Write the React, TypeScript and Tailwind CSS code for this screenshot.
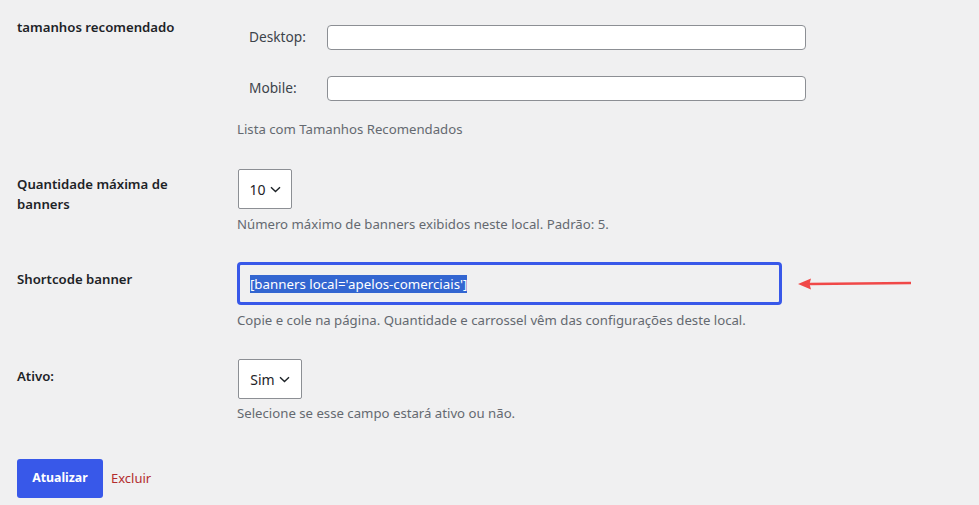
import type { ReactNode } from "react";

const font = { fontFamily: '"Segoe UI", "Noto Sans", "Liberation Sans", sans-serif' };

function Chevron() {
  return (
    <svg width="11" height="7" viewBox="0 0 11 7" className="ml-[4px]">
      <path d="M1 1.2 L5.5 5.6 L10 1.2" fill="none" stroke="#1d2327" strokeWidth="1.4" />
    </svg>
  );
}

function Select({ value, width }: { value: string; width: string }) {
  return (
    <div
      className={`flex h-[40px] ${width} items-center justify-center rounded-[2px] border border-[#8c8f94] bg-white text-[14px] text-[#1d2327]`}
    >
      {value}
      <Chevron />
    </div>
  );
}

function Row({ label, pt, children }: { label: ReactNode; pt: string; children: ReactNode }) {
  return (
    <div className="flex items-start">
      <div className={`w-[220px] shrink-0 ${pt} pr-[20px] text-[13.2px] leading-[20px] font-semibold text-[#1d2327]`}>
        {label}
      </div>
      <div className="flex flex-col">{children}</div>
    </div>
  );
}

function Desc({ children, mt }: { children: ReactNode; mt: string }) {
  return <p className={`${mt} text-[13.2px] leading-[18px] text-[#646970]`}>{children}</p>;
}

export default function App() {
  return (
    <div className="min-h-[505px] bg-[#f0f0f1] pt-[17px] pl-[17px]" style={font}>
      {/* tamanhos */}
      <Row label="tamanhos recomendado" pt="pt-0">
        <div className="mt-[8px] flex items-center">
          <span className="w-[90px] pl-[12px] text-[13.7px] text-[#3c434a]">Desktop:</span>
          <div className="h-[25px] w-[479px] rounded-[4px] border border-[#8c8f94] bg-white" />
        </div>
        <div className="mt-[26px] flex items-center">
          <span className="w-[90px] pl-[12px] text-[13.7px] text-[#3c434a]">Mobile:</span>
          <div className="h-[25px] w-[479px] rounded-[4px] border border-[#8c8f94] bg-white" />
        </div>
        <Desc mt="mt-[19px]">Lista com Tamanhos Recomendados</Desc>
      </Row>

      {/* quantidade */}
      <div className="mt-[31px]">
        <Row label={<>Quantidade máxima de<br />banners</>} pt="pt-[5px]">
          <div className="pl-[1px]">
            <Select value="10" width="w-[54px]" />
          </div>
          <Desc mt="mt-[6px]">Número máximo de banners exibidos neste local. Padrão: 5.</Desc>
        </Row>
      </div>

      {/* shortcode */}
      <div className="mt-[29px]">
        <Row label="Shortcode banner" pt="pt-[7px]">
          <div className="flex items-center">
            <div className="flex h-[43px] w-[545px] items-center rounded-[4px] border-[3px] border-[#3858e9] bg-[#f0f0f1] pl-[10px]">
              <span className="bg-[#3366d1] text-[13.3px] leading-[18px] text-white">
                [banners local='apelos-comerciais']
              </span>
            </div>
            <svg width="116" height="14" viewBox="0 0 116 14" className="ml-[15px]">
              <line x1="12" y1="7" x2="114" y2="6" stroke="#f04848" strokeWidth="2.4" />
              <path d="M1 7 L14 1.5 L12.5 7 L14 12.5 Z" fill="#f04848" />
            </svg>
          </div>
          <Desc mt="mt-[6px]">Copie e cole na página. Quantidade e carrossel vêm das configurações deste local.</Desc>
        </Row>
      </div>

      {/* ativo */}
      <div className="mt-[30px]">
        <Row label="Ativo:" pt="pt-[7px]">
          <div className="pl-[1px]">
            <Select value="Sim" width="w-[64px]" />
          </div>
          <Desc mt="mt-[5px]">Selecione se esse campo estará ativo ou não.</Desc>
        </Row>
      </div>

      <div className="mt-[37px] flex items-center">
        <button className="h-[39px] w-[86px] rounded-[3px] bg-[#3858e9] text-[12.3px] font-bold text-white">
          Atualizar
        </button>
        <a className="ml-[8px] text-[13px] text-[#b32d2e]">Excluir</a>
      </div>
    </div>
  );
}
